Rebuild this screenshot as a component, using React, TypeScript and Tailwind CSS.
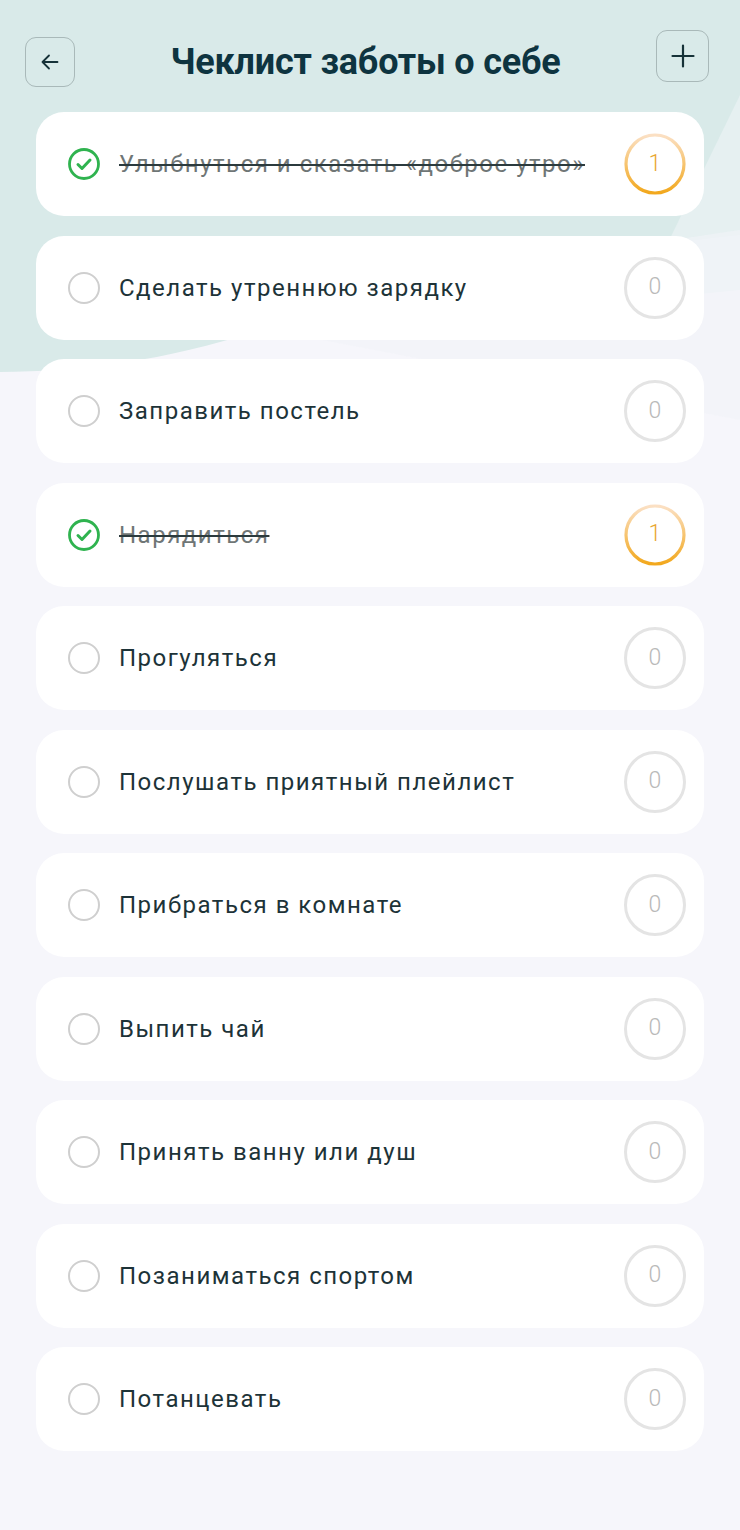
import React from 'react'

type Task = { title: string; done: boolean }

const tasks: Task[] = [
  { title: 'Улыбнуться и сказать «доброе утро»', done: true },
  { title: 'Сделать утреннюю зарядку', done: false },
  { title: 'Заправить постель', done: false },
  { title: 'Нарядиться', done: true },
  { title: 'Прогуляться', done: false },
  { title: 'Послушать приятный плейлист', done: false },
  { title: 'Прибраться в комнате', done: false },
  { title: 'Выпить чай', done: false },
  { title: 'Принять ванну или душ', done: false },
  { title: 'Позаниматься спортом', done: false },
  { title: 'Потанцевать', done: false },
]

function CheckMark({ done }: { done: boolean }) {
  if (!done) {
    return <span className="block h-[32px] w-[32px] shrink-0 rounded-full border-[2.5px] border-[#cfcfcf]" />
  }
  return (
    <svg width="32" height="32" viewBox="0 0 32 32" className="shrink-0">
      <circle cx="16" cy="16" r="14.5" fill="none" stroke="#2fb34f" strokeWidth="2.8" />
      <path d="M10 16.5l4 4 8-8.5" fill="none" stroke="#2fb34f" strokeWidth="3" strokeLinecap="round" strokeLinejoin="round" />
    </svg>
  )
}

function Counter({ value, active }: { value: number; active: boolean }) {
  if (!active) {
    return (
      <div className="flex h-[62px] w-[62px] shrink-0 items-center justify-center rounded-full border-[3px] border-[#e4e4e4] text-[23px] font-light text-[#b9b9b9]">
        {value}
      </div>
    )
  }
  return (
    <div className="relative flex h-[62px] w-[62px] shrink-0 items-center justify-center text-[23px] font-light text-[#e9a631]">
      <svg width="62" height="62" viewBox="0 0 62 62" className="absolute inset-0">
        <defs>
          <linearGradient id="ring" x1="0" y1="0" x2="0" y2="1">
            <stop offset="0" stopColor="#fbe0c4" />
            <stop offset="1" stopColor="#f2a81d" />
          </linearGradient>
        </defs>
        <circle cx="31" cy="31" r="29" fill="none" stroke="url(#ring)" strokeWidth="3.2" />
      </svg>
      <span className="relative">{value}</span>
    </div>
  )
}

function TaskCard({ task }: { task: Task }) {
  return (
    <div className="flex h-[104px] items-center rounded-[28px] bg-white pl-[32px] pr-[18px]">
      <CheckMark done={task.done} />
      <span
        className={
          task.done
            ? 'ml-[19px] flex-1 whitespace-nowrap text-[24px] tracking-[1.5px] text-[#6f7676] line-through decoration-[#2b3a3d] decoration-[2px]'
            : 'ml-[19px] flex-1 whitespace-nowrap text-[24px] tracking-[1.5px] text-[#1d3338]'
        }
      >
        {task.title}
      </span>
      <Counter value={task.done ? 1 : 0} active={task.done} />
    </div>
  )
}

export default function App() {
  return (
    <div className="relative min-h-[1530px] w-[740px] overflow-hidden bg-[#f6f6fb] font-['Roboto',sans-serif]">
      <svg width="740" height="420" viewBox="0 0 740 420" className="absolute left-0 top-0">
        <path d="M0 0H740V235C600 250 400 280 260 330C170 360 80 372 0 372Z" fill="#d9eae9" />
        <path d="M740 95L640 300L740 290Z" fill="#e9f1f3" opacity="0.8" />
        <path d="M740 230C600 250 420 280 270 330L740 420Z" fill="#f1f4f8" opacity="0.6" />
      </svg>

      <div className="relative flex flex-col">
        <div className="flex h-[112px] items-start justify-between pl-[25px] pr-[31px]">
          <button className="mt-[37px] flex h-[50px] w-[50px] items-center justify-center rounded-[11px] border-[1.5px] border-[#a9b9b9]">
            <svg width="24" height="24" viewBox="0 0 24 24" fill="none" stroke="#163238" strokeWidth="1.8" strokeLinecap="round" strokeLinejoin="round">
              <path d="M19.5 12H4.5M11 5.5L4.5 12l6.5 6.5" />
            </svg>
          </button>
          <h1 className="mt-[40px] text-[36px] font-bold leading-[44px] tracking-[-0.2px] text-[#0e3440]">Чеклист заботы о себе</h1>
          <button className="mt-[30px] flex h-[52px] w-[53px] items-center justify-center rounded-[11px] border-[1.5px] border-[#a9b9b9]">
            <svg width="28" height="28" viewBox="0 0 28 28" fill="none" stroke="#163238" strokeWidth="2.2" strokeLinecap="round">
              <path d="M14 3.5V24.5M3.5 14H24.5" />
            </svg>
          </button>
        </div>

        <div className="flex flex-col gap-[19.5px] px-[36px] pb-[80px]">
          {tasks.map((t) => (
            <TaskCard key={t.title} task={t} />
          ))}
        </div>
      </div>
    </div>
  )
}
